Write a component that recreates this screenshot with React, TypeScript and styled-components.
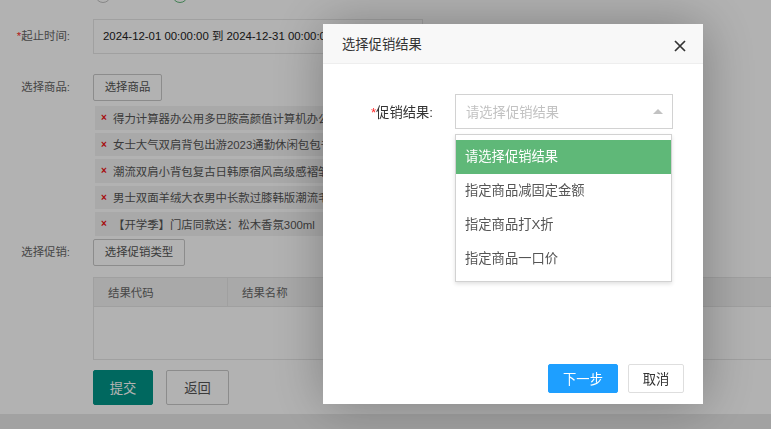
import React from 'react';
import styled, { createGlobalStyle } from 'styled-components';

const GlobalStyle = createGlobalStyle`
  html, body {
    margin: 0;
    padding: 0;
  }
  body {
    background: #e9e9e9;
    font-family: "Liberation Sans", "Noto Sans CJK SC", sans-serif;
    color: #333;
    overflow: hidden;
  }
  * {
    box-sizing: border-box;
  }
`;

const Page = styled.div`
  height: 414px;
  background: #fff;
  overflow: hidden;
`;

const RadioRow = styled.div`
  display: flex;
  gap: 61px;
  margin: -13px 0 0 95px;
  height: 16px;
`;

const Radio = styled.span<{ $checked?: boolean }>`
  width: 16px;
  height: 16px;
  border-radius: 50%;
  border: 1.5px solid ${(p) => (p.$checked ? '#5fb878' : '#c2c2c2')};
`;

const FormRow = styled.div<{ $mt: number }>`
  display: flex;
  align-items: flex-start;
  margin-top: ${(p) => p.$mt}px;
`;

const Label = styled.label<{ $h: number }>`
  flex-shrink: 0;
  width: 93px;
  padding-right: 23px;
  text-align: right;
  font-size: 11.4px;
  line-height: ${(p) => p.$h}px;
  color: #666;
  white-space: nowrap;
`;

const Req = styled.span`
  color: #ff2a2a;
`;

const Field = styled.div`
  flex: 1;
  display: flex;
  flex-direction: column;
  align-items: flex-start;
  min-width: 0;
`;

const DateInput = styled.div`
  width: 330px;
  height: 35px;
  border: 1px solid #e6e6e6;
  padding-left: 9px;
  font-size: 11.4px;
  line-height: 33px;
  color: #222;
  white-space: nowrap;
  overflow: hidden;
`;

const GhostButton = styled.button<{ $w: number }>`
  width: ${(p) => p.$w}px;
  height: 27px;
  padding: 0;
  border: 1px solid #c9c9c9;
  border-radius: 2px;
  background: #fff;
  color: #555;
  font-family: inherit;
  font-size: 11.4px;
  line-height: 25px;
`;

const GoodsList = styled.div`
  margin: 5px 0 0 2px;
  width: 420px;
`;

const GoodsItem = styled.div`
  display: flex;
  align-items: center;
  height: 23.5px;
  margin-bottom: 3px;
  padding-left: 6px;
  background: #f2f2f2;
  font-size: 11.4px;
  color: #555;
  white-space: nowrap;
  overflow: hidden;
`;

const RemoveMark = styled.span`
  width: 12px;
  flex-shrink: 0;
  color: #f01010;
  font-size: 10px;
  font-weight: bold;
`;

const ResultTable = styled.table`
  margin-top: 11px;
  width: 700px;
  border-collapse: collapse;
  border: 1px solid #e6e6e6;
  font-size: 11.4px;
  color: #666;
`;

const HeadCell = styled.th<{ $w?: number }>`
  width: ${(p) => (p.$w ? `${p.$w}px` : 'auto')};
  height: 29px;
  padding: 0 14px;
  background: #f2f2f2;
  border: 1px solid #e6e6e6;
  font-weight: normal;
  text-align: left;
`;

const EmptyCell = styled.td`
  height: 53px;
`;

const ActionRow = styled.div`
  display: flex;
  gap: 13px;
  margin-top: 10px;
  padding-left: 93px;
`;

const ActionButton = styled.button<{ $primary?: boolean; $w: number }>`
  width: ${(p) => p.$w}px;
  height: 35px;
  padding: 0;
  border: 1px solid ${(p) => (p.$primary ? '#009688' : '#c9c9c9')};
  border-radius: 2px;
  background: ${(p) => (p.$primary ? '#009688' : '#fff')};
  color: ${(p) => (p.$primary ? '#fff' : '#555')};
  font-family: inherit;
  font-size: 13.3px;
`;

const Mask = styled.div`
  position: fixed;
  inset: 0;
  background: rgba(0, 0, 0, 0.3);
`;

const Modal = styled.div`
  position: fixed;
  left: 323px;
  top: 24px;
  width: 380px;
  height: 380px;
  display: flex;
  flex-direction: column;
  background: #fff;
  box-shadow: 1px 1px 50px rgba(0, 0, 0, 0.3);
`;

const ModalHeader = styled.div`
  height: 40px;
  display: flex;
  align-items: center;
  justify-content: space-between;
  padding: 0 17px 0 19px;
  background: #f8f8f8;
  border-bottom: 1px solid #eee;
`;

const ModalTitle = styled.span`
  font-size: 13.3px;
  color: #333;
`;

const CloseIcon = styled.svg`
  margin-top: 4px;
`;

const ModalBody = styled.div`
  flex: 1;
  padding-top: 30px;
`;

const ModalField = styled.div`
  display: flex;
  align-items: center;
`;

const ModalLabel = styled.label`
  width: 132px;
  padding-right: 22px;
  text-align: right;
  font-size: 13.3px;
  color: #333;
  white-space: nowrap;
`;

const SelectWrap = styled.div`
  position: relative;
  width: 218px;
`;

const SelectBox = styled.div`
  height: 35px;
  display: flex;
  align-items: center;
  justify-content: space-between;
  padding: 0 9px 0 10px;
  border: 1px solid #d2d2d2;
  font-size: 13.3px;
  color: #c2c2c2;
`;

const Dropdown = styled.div`
  position: absolute;
  top: calc(100% + 5px);
  left: 0;
  width: 217px;
  padding: 5px 0;
  border: 1px solid #d2d2d2;
  background: #fff;
  box-shadow: 0 2px 4px rgba(0, 0, 0, 0.12);
`;

const Option = styled.div<{ $active?: boolean }>`
  line-height: 34px;
  padding: 0 9px;
  font-size: 13.3px;
  color: ${(p) => (p.$active ? '#fff' : '#555')};
  background: ${(p) => (p.$active ? '#5fb878' : 'transparent')};
  white-space: nowrap;
`;

const ModalFooter = styled.div`
  display: flex;
  justify-content: flex-end;
  gap: 10px;
  padding: 0 19px 11px 0;
`;

const FooterButton = styled.button<{ $primary?: boolean; $w: number }>`
  width: ${(p) => p.$w}px;
  height: 29px;
  padding: 0;
  border: 1px solid ${(p) => (p.$primary ? '#1e9fff' : '#dedede')};
  border-radius: 2px;
  background: ${(p) => (p.$primary ? '#1e9fff' : '#fff')};
  color: ${(p) => (p.$primary ? '#fff' : '#333')};
  font-family: inherit;
  font-size: 13.3px;
`;

const goods = [
  '得力计算器办公用多巴胺高颜值计算机办公室专用',
  '女士大气双肩背包出游2023通勤休闲包包书包',
  '潮流双肩小背包复古日韩原宿风高级感褶皱包',
  '男士双面羊绒大衣男中长款过膝韩版潮流毛呢外套',
  '【开学季】门店同款送：松木香氛300ml',
];

const options = ['请选择促销结果', '指定商品减固定金额', '指定商品打X折', '指定商品一口价'];

const App: React.FC = () => {
  return (
    <>
      <GlobalStyle />
      <Page>
        <RadioRow>
          <Radio />
          <Radio $checked />
        </RadioRow>

        <FormRow $mt={16}>
          <Label $h={35}>
            <Req>*</Req>起止时间:
          </Label>
          <Field>
            <DateInput>2024-12-01 00:00:00 到 2024-12-31 00:00:00</DateInput>
          </Field>
        </FormRow>

        <FormRow $mt={20}>
          <Label $h={27}>选择商品:</Label>
          <Field>
            <GhostButton $w={69}>选择商品</GhostButton>
            <GoodsList>
              {goods.map((g) => (
                <GoodsItem key={g}>
                  <RemoveMark>×</RemoveMark>
                  {g}
                </GoodsItem>
              ))}
            </GoodsList>
          </Field>
        </FormRow>

        <FormRow $mt={0}>
          <Label $h={27}>选择促销:</Label>
          <Field>
            <GhostButton $w={92}>选择促销类型</GhostButton>
            <ResultTable>
              <thead>
                <tr>
                  <HeadCell $w={134}>结果代码</HeadCell>
                  <HeadCell>结果名称</HeadCell>
                </tr>
              </thead>
              <tbody>
                <tr>
                  <EmptyCell colSpan={2} />
                </tr>
              </tbody>
            </ResultTable>
          </Field>
        </FormRow>

        <ActionRow>
          <ActionButton $primary $w={60}>提交</ActionButton>
          <ActionButton $w={63}>返回</ActionButton>
        </ActionRow>
      </Page>

      <Mask />
      <Modal>
        <ModalHeader>
          <ModalTitle>选择促销结果</ModalTitle>
          <CloseIcon width="12" height="12" viewBox="0 0 12 12">
            <path d="M1 1 L11 11 M11 1 L1 11" stroke="#333" strokeWidth="1.7" fill="none" />
          </CloseIcon>
        </ModalHeader>
        <ModalBody>
          <ModalField>
            <ModalLabel>
              <Req>*</Req>促销结果:
            </ModalLabel>
            <SelectWrap>
              <SelectBox>
                <span>请选择促销结果</span>
                <svg width="10" height="5" viewBox="0 0 10 5">
                  <path d="M0 5 L5 0 L10 5 Z" fill="#c2c2c2" />
                </svg>
              </SelectBox>
              <Dropdown>
                {options.map((o, i) => (
                  <Option key={o} $active={i === 0}>
                    {o}
                  </Option>
                ))}
              </Dropdown>
            </SelectWrap>
          </ModalField>
        </ModalBody>
        <ModalFooter>
          <FooterButton $primary $w={70}>下一步</FooterButton>
          <FooterButton $w={56}>取消</FooterButton>
        </ModalFooter>
      </Modal>
    </>
  );
};

export default App;
